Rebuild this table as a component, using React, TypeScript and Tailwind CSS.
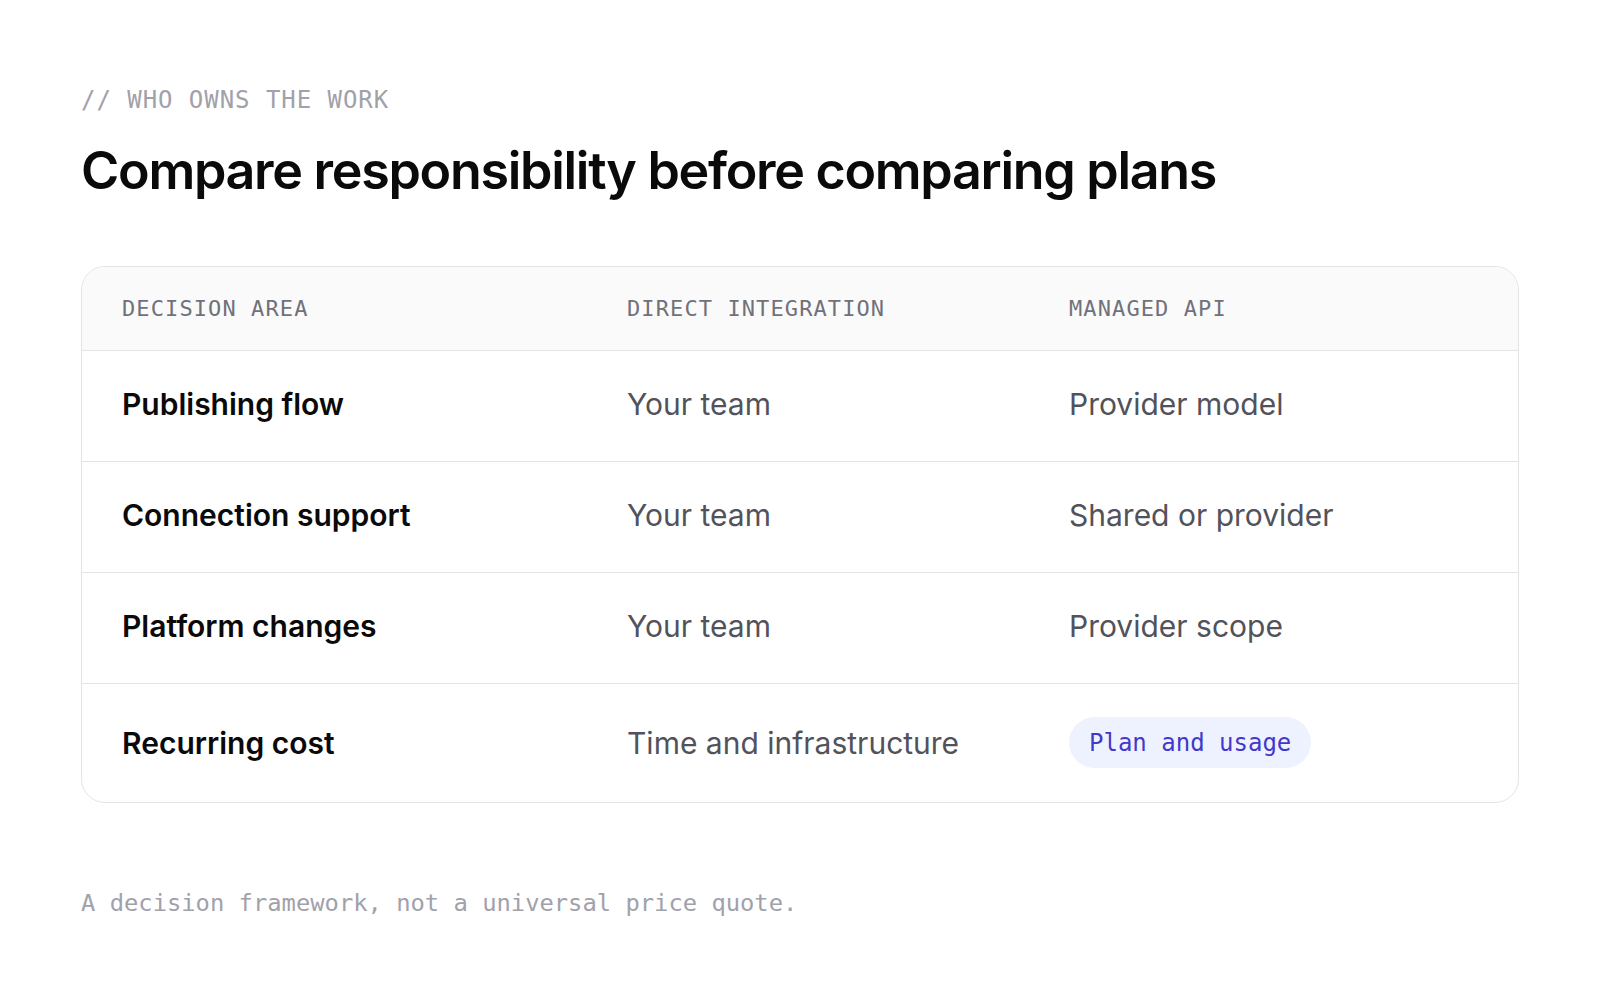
import React from 'react';

type Row = {
    area: string;
    direct: string;
    managed: string;
    pill?: boolean;
};

const rows: Row[] = [
    { area: 'Publishing flow', direct: 'Your team', managed: 'Provider model' },
    { area: 'Connection support', direct: 'Your team', managed: 'Shared or provider' },
    { area: 'Platform changes', direct: 'Your team', managed: 'Provider scope' },
    { area: 'Recurring cost', direct: 'Time and infrastructure', managed: 'Plan and usage', pill: true },
];

const mono = "font-['DejaVu_Sans_Mono',monospace]";
const sans = "font-['Inter',sans-serif]";

export default function App() {
    return (
        <div className="min-h-screen w-full bg-white px-[81px] pt-[84px]">
            <p className={`${mono} text-[24px] leading-[32px] tracking-[0.04em] text-[#a1a1aa]`}>
                // WHO OWNS THE WORK
            </p>
            <h1
                className={`${sans} mt-[24px] text-[52px] leading-[62px] font-semibold tracking-[-0.025em] text-[#0a0a0a]`}
            >
                Compare responsibility before comparing plans
            </h1>

            <div className="mt-[64px] overflow-hidden rounded-[24px] border border-[#e4e4e7]">
                <div className="grid h-[84px] grid-cols-[505px_442px_1fr] items-center border-b border-[#e4e4e7] bg-[#fafafa] px-10">
                    {['DECISION AREA', 'DIRECT INTEGRATION', 'MANAGED API'].map((label) => (
                        <p
                            key={label}
                            className={`${mono} text-[22px] leading-[28px] tracking-[0.05em] text-[#71717a]`}
                        >
                            {label}
                        </p>
                    ))}
                </div>

                {rows.map((row, i) => (
                    <div
                        key={row.area}
                        className={`grid grid-cols-[505px_442px_1fr] items-center px-10 ${
                            i < rows.length - 1 ? 'border-b border-[#e4e4e7]' : ''
                        } ${row.pill ? 'pt-[33px] pb-[34px]' : 'pt-[38px] pb-[42px]'}`}
                    >
                        <p className={`${sans} text-[30px] leading-[30px] font-semibold text-[#0a0a0a]`}>
                            {row.area}
                        </p>
                        <p className={`${sans} text-[30px] leading-[30px] text-[#52525b]`}>{row.direct}</p>
                        {row.pill ? (
                            <div className="flex">
                                <span
                                    className={`${mono} flex h-[51px] items-center rounded-full bg-[#eef2ff] px-5 text-[24px] text-[#4338ca]`}
                                >
                                    {row.managed}
                                </span>
                            </div>
                        ) : (
                            <p className={`${sans} text-[30px] leading-[30px] text-[#52525b]`}>
                                {row.managed}
                            </p>
                        )}
                    </div>
                ))}
            </div>

            <p className={`${mono} mt-[84px] text-[23.8px] leading-[32px] text-[#a1a1aa]`}>
                A decision framework, not a universal price quote.
            </p>
        </div>
    );
}
